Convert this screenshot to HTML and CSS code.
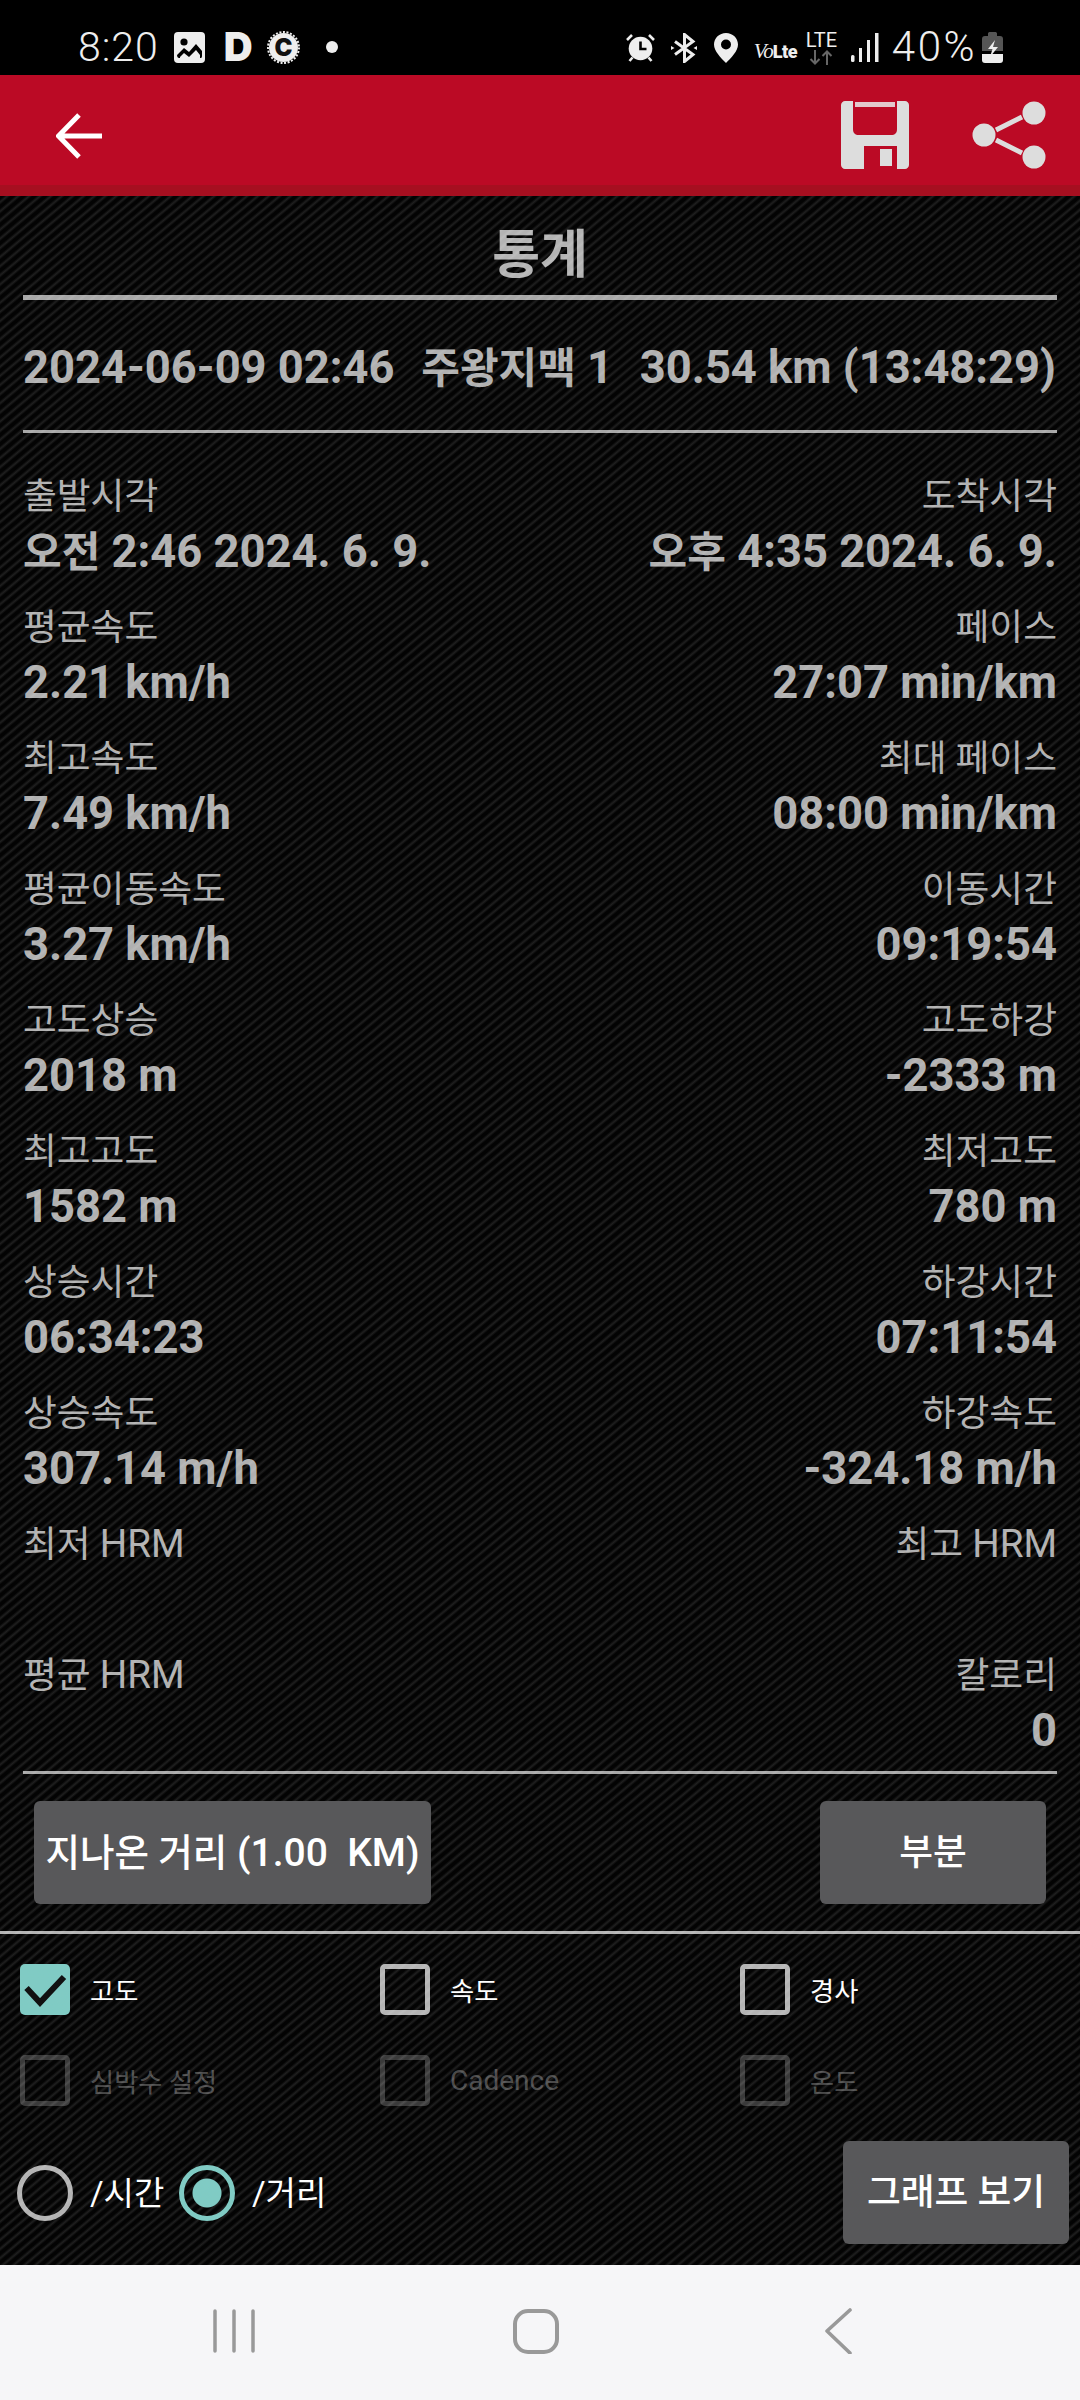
FILE: index.html
```html
<!DOCTYPE html>
<html lang="ko">
<head>
<meta charset="utf-8">
<title>통계</title>
<link rel="stylesheet" href="styles.css">
</head>
<body>
<div class="page">
  <header class="status">
    <div class="status-left">
      <span class="clock">8:20</span>
      <svg class="i-img" viewBox="0 0 31 31"><rect width="31" height="31" rx="4" fill="#eee"/><circle cx="10" cy="10" r="3.6" fill="#000"/><path d="M3 23l7-7 5 4 7-8 6 7v5c0 2-1 2-2 2H5c-1 0-2-1-2-3z" fill="#000"/><path d="M6 24l4-4 5 4 7-7 4 5v3c0 1 0 1-1 1H7c-1 0-1 0-1-2z" fill="#eee" transform="translate(0 1)"/></svg>
      <span class="d-logo">D</span>
      <svg class="i-c" viewBox="0 0 33 35"><circle cx="16.500" cy="17.500" r="14.500" fill="#eee"/><circle cx="16.500" cy="17.500" r="15.500" fill="none" stroke="#eee" stroke-width="2" stroke-dasharray="2 1.600"/><text x="16.500" y="26" text-anchor="middle" class="c-text">C</text></svg>
      <span class="dot"></span>
    </div>
    <div class="status-right">
      <svg class="i-alarm" viewBox="0 0 29 29"><circle cx="14.500" cy="15.500" r="11.800" fill="#eee"/><path d="M14.500 8.500V16H20.500" fill="none" stroke="#000" stroke-width="2.600"/><path d="M1 7l5-5M28 7l-5-5M3.500 28l3-3.500M25.500 28l-3-3.500" stroke="#eee" stroke-width="2.600" fill="none"/></svg>
      <svg class="i-bt" viewBox="0 0 26 30"><path d="M4 8.500l18 13-8.500 7V1.500l8.500 7-18 13" fill="none" stroke="#eee" stroke-width="3"/><path d="M0 13l3.500 2-3.500 2zM26 13l-3.500 2 3.500 2z" fill="#eee"/></svg>
      <svg class="i-pin" viewBox="0 0 24 30"><path fill-rule="evenodd" d="M12 0c6.600 0 12 5 12 11.500C24 18 17 25 12 30 7 25 0 18 0 11.500 0 5 5.400 0 12 0zm0 6.500a5 5 0 100 10 5 5 0 000-10z" fill="#eee"/></svg>
      <span class="volte"><i>Vo</i><b>Lte</b></span>
      <span class="lte">
        <span class="lte-text">LTE</span>
        <svg class="i-arrows" viewBox="0 0 24 15"><path d="M6 0v13M1.500 9L6 13.500 10.500 9" fill="none" stroke="#666" stroke-width="2"/><path d="M18 15V2M13.500 6L18 1.500 22.500 6" fill="none" stroke="#666" stroke-width="2"/></svg>
      </span>
      <svg class="i-signal" viewBox="0 0 28 29"><rect x="0" y="22" width="3.500" height="7" rx="1.500" fill="#eee"/><rect x="8" y="15" width="3" height="14" fill="#eee"/><rect x="16" y="7" width="3" height="22" fill="#eee"/><rect x="24" y="0" width="3.500" height="29" fill="#eee"/></svg>
      <span class="battery-text">40%</span>
      <svg class="i-bat" viewBox="0 0 21 31"><path d="M6 4V1.500C6 .5 7 0 8 0h5c1 0 2 .5 2 1.500V4h3c2 0 3 1 3 3v12H0V7c0-2 1-3 3-3z" fill="#555"/><path d="M0 22h21v6c0 2-1 3-3 3H3c-2 0-3-1-3-3z" fill="#eee"/><path d="M13 8l-7 9h4.500l-2.500 8 8-10h-5z" fill="#eee"/></svg>
    </div>
  </header>

  <div class="toolbar">
    <svg class="i-back" viewBox="0 0 46 46"><path d="M46 23H4M23 2L2.500 23 23 44" fill="none" stroke="#fff" stroke-width="5"/></svg>
    <div class="actions">
      <svg class="i-save" viewBox="0 0 68 68"><path fill-rule="evenodd" d="M4 0h60c2 0 4 2 4 4v60c0 2-2 4-4 4H4c-2 0-4-2-4-4V4c0-2 2-4 4-4zm8 0v28c0 4 2 6 6 6h32c4 0 6-2 6-6V0zm11 45v23h33V45z" fill="#ddd"/><rect x="14" y="1" width="40" height="5" fill="#e3c8cc"/><rect x="39" y="48" width="12" height="17" fill="#ddd"/></svg>
      <svg class="i-share" viewBox="0 0 74 68"><circle cx="62" cy="12" r="11.500" fill="#ddd"/><circle cx="12" cy="34" r="11.500" fill="#ddd"/><circle cx="62" cy="56" r="11.500" fill="#ddd"/><path d="M24 29l26-13M24 39l26 13" stroke="#ddd" stroke-width="5" fill="none"/></svg>
    </div>
  </div>

  <main class="content">
    <h1 class="title">통계</h1>
    <div class="rule rule-thick"></div>
    <div class="summary"><span>2024-06-09 02:46</span><span><span class="ko">주왕지맥</span> 1</span><span>30.54 km (13:48:29)</span></div>
    <div class="rule rule-thin"></div>

    <section class="stats">
      <div class="stat"><div class="label">출발시각</div><div class="value"><span class="ko">오전</span> 2:46 2024. 6. 9.</div></div>
      <div class="stat end"><div class="label">도착시각</div><div class="value"><span class="ko">오후</span> 4:35 2024. 6. 9.</div></div>
      <div class="stat"><div class="label">평균속도</div><div class="value">2.21 km/h</div></div>
      <div class="stat end"><div class="label">페이스</div><div class="value">27:07 min/km</div></div>
      <div class="stat"><div class="label">최고속도</div><div class="value">7.49 km/h</div></div>
      <div class="stat end"><div class="label">최대 페이스</div><div class="value">08:00 min/km</div></div>
      <div class="stat"><div class="label">평균이동속도</div><div class="value">3.27 km/h</div></div>
      <div class="stat end"><div class="label">이동시간</div><div class="value">09:19:54</div></div>
      <div class="stat"><div class="label">고도상승</div><div class="value">2018 m</div></div>
      <div class="stat end"><div class="label">고도하강</div><div class="value">-2333 m</div></div>
      <div class="stat"><div class="label">최고고도</div><div class="value">1582 m</div></div>
      <div class="stat end"><div class="label">최저고도</div><div class="value">780 m</div></div>
      <div class="stat"><div class="label">상승시간</div><div class="value">06:34:23</div></div>
      <div class="stat end"><div class="label">하강시간</div><div class="value">07:11:54</div></div>
      <div class="stat"><div class="label">상승속도</div><div class="value">307.14 m/h</div></div>
      <div class="stat end"><div class="label">하강속도</div><div class="value">-324.18 m/h</div></div>
      <div class="stat"><div class="label">최저 <span class="latin">HRM</span></div><div class="value"></div></div>
      <div class="stat end"><div class="label">최고 <span class="latin">HRM</span></div><div class="value"></div></div>
      <div class="stat"><div class="label">평균 <span class="latin">HRM</span></div><div class="value"></div></div>
      <div class="stat end"><div class="label">칼로리</div><div class="value">0</div></div>
    </section>
    <div class="rule rule-thin rule-stats"></div>

    <div class="buttons">
      <button class="btn btn-dist"><span class="btn-ko">지나온 거리</span> (1.00&nbsp;&nbsp;KM)</button>
      <button class="btn btn-part">부분</button>
    </div>
    <div class="rule-full"></div>

    <div class="checks">
      <label class="check"><span class="box on"><svg class="tick" viewBox="0 0 50 51"><path d="M6.500 24L20 38.500 44 13" fill="none" stroke="#111" stroke-width="6"/></svg></span><span>고도</span></label>
      <label class="check"><span class="box"></span><span>속도</span></label>
      <label class="check"><span class="box"></span><span>경사</span></label>
      <label class="check off"><span class="box"></span><span>심박수 설정</span></label>
      <label class="check off"><span class="box"></span><span class="check-latin">Cadence</span></label>
      <label class="check off"><span class="box"></span><span>온도</span></label>
    </div>

    <div class="graph-row">
      <label class="radio"><span class="ring"></span><span class="radio-text">/시간</span></label>
      <label class="radio"><span class="ring on"></span><span class="radio-text">/거리</span></label>
      <button class="btn btn-graph">그래프 보기</button>
    </div>
  </main>

  <nav class="navbar">
    <svg class="nav-icon" viewBox="0 0 60 46"><path d="M11 3v40M30 3v40M49 3v40" stroke="#999" stroke-width="3.500" stroke-linecap="round" fill="none"/></svg>
    <svg class="nav-icon" viewBox="0 0 60 46"><rect x="9" y="3" width="42" height="41" rx="13" fill="none" stroke="#999" stroke-width="4"/></svg>
    <svg class="nav-icon" viewBox="0 0 60 46"><path d="M42 2L19 23 42 45" fill="none" stroke="#999" stroke-width="3.600" stroke-linecap="round" stroke-linejoin="round"/></svg>
  </nav>
</div>
</body>
</html>
```

FILE: styles.css
```css
* { box-sizing: border-box; }
html, body { margin: 0; padding: 0; background: #000; }
body { font-family: "Roboto", "Noto Sans CJK KR", sans-serif; }
.page { width: 1080px; height: 2400px; display: flex; flex-direction: column; overflow: hidden; }

/* status bar */
.status { height: 75px; background: #000; display: flex; justify-content: space-between; align-items: flex-start; padding: 30px 77px 0 78px; color: #eee; flex: none; }
.status-left, .status-right { display: flex; align-items: flex-start; }
.clock { font-size: 41px; font-weight: 300; line-height: 34px; letter-spacing: 1px; }
.i-img { width: 31px; height: 31px; margin: 2px 0 0 15px; }
.d-logo { font-family: "Inter", sans-serif; font-weight: 900; font-size: 40px; line-height: 34px; margin-left: 19px; width: 29px; }
.i-c { width: 33px; height: 35px; margin-left: 14px; }
.c-text { font-family: "Inter", sans-serif; font-weight: 900; font-size: 24px; fill: #111; }
.dot { width: 12px; height: 12px; border-radius: 50%; background: #eee; margin: 11px 0 0 26px; }
.i-alarm { width: 29px; height: 29px; margin-top: 3px; }
.i-bt { width: 26px; height: 30px; margin: 3px 0 0 16px; }
.i-pin { width: 24px; height: 30px; margin: 3px 0 0 17px; }
.volte { width: 41px; margin: 8px 0 0 16px; line-height: 26px; white-space: nowrap; display: flex; align-items: baseline; }
.volte i { font-family: "Liberation Serif", serif; font-size: 21px; font-weight: 400; letter-spacing: -1px; }
.volte b { font-family: "Roboto", sans-serif; font-size: 18px; font-weight: 900; letter-spacing: -.5px; }
.lte { width: 33px; margin: 3px 0 0 10px; display: flex; flex-direction: column; align-items: center; }
.lte-text { font-size: 20px; line-height: 15px; font-weight: 400; }
.i-arrows { width: 24px; height: 15px; margin-top: 2px; }
.i-signal { width: 28px; height: 29px; margin: 3px 0 0 13px; }
.battery-text { font-size: 42px; font-weight: 300; line-height: 34px; margin-left: 13px; letter-spacing: 2.500px; }
.i-bat { width: 21px; height: 31px; margin: 2px 0 0 5px; }

/* toolbar */
.toolbar { height: 121px; flex: none; background: #bb0a25; border-bottom: 11px solid #a60f20; display: flex; justify-content: space-between; align-items: flex-start; padding: 26px 34px 0 56px; }
.i-back { width: 46px; height: 46px; margin-top: 12px; }
.actions { display: flex; gap: 63px; }
.i-save { width: 68px; height: 68px; }
.i-share { width: 74px; height: 68px; }

/* content */
.content { flex: 1; color: rgba(255, 255, 255, .7); background-color: #060606; background-image: repeating-linear-gradient(140deg, #030303 0, #030303 2.500px, #1f1f1f 4.800px, #030303 7px); display: flex; flex-direction: column; }
.title { margin: 0; height: 99px; padding-top: 25px; font-size: 52px; line-height: 70px; font-weight: 700; text-align: center; }
.rule { margin: 0 23px; background: rgba(255, 255, 255, .65); flex: none; }
.rule-thick { height: 5px; }
.rule-thin { height: 3px; }
.summary { margin: 38px 24px 32px 23px; height: 60px; line-height: 60px; font-size: 45.300px; font-weight: 700; display: flex; justify-content: space-between; white-space: nowrap; }
.ko { font-size: 42px; }
.stats { margin-top: 37px; padding: 0 23px; display: grid; grid-template-columns: 1fr 1fr; row-gap: 17px; }
.stat { height: 114px; }
.stat.end { text-align: right; }
.label { font-size: 36.750px; line-height: 54px; height: 50px; white-space: nowrap; }
.latin { font-size: 38.500px; line-height: 1; }
.value { font-size: 45.300px; line-height: 64px; height: 64px; font-weight: 700; white-space: nowrap; }
.rule-stats { margin-top: 8px; }

.buttons { display: flex; justify-content: space-between; padding: 27px 34px; flex: none; }
.btn { border: 0; border-radius: 6px; background: #58585a; color: #fff; font: 500 36.750px/1 "Roboto", "Noto Sans CJK KR", sans-serif; height: 103px; padding: 2px 0 0; white-space: nowrap; }
.btn-dist { width: 397px; font-size: 39px; }
.btn-ko { font-size: 37.500px; }
.btn-part { width: 226px; }
.rule-full { height: 3px; background: rgba(255, 255, 255, .7); flex: none; }

.checks { padding: 30px 0 0 20px; display: grid; grid-template-columns: repeat(3, 360px); row-gap: 40px; }
.check { display: flex; align-items: center; gap: 20px; font-size: 26.250px; color: #fff; height: 51px; }
.check-latin { font-size: 28px; }
.box { width: 50px; height: 51px; border: 5px solid rgba(255, 255, 255, .7); border-radius: 5px; flex: none; }
.box.on { background: #80cbc4; border: 0; }
.tick { display: block; width: 50px; height: 51px; }
.check.off { color: rgba(255, 255, 255, .3); }
.check.off .box { border-color: rgba(255, 255, 255, .22); }

.graph-row { margin-top: 35px; padding: 0 11px 0 17px; display: flex; align-items: center; }
.radio { display: flex; align-items: center; gap: 17px; font-size: 33px; color: #fff; width: 162px; }
.radio-text { padding-bottom: 4px; }
.ring { width: 56px; height: 56px; border-radius: 50%; border: 5px solid rgba(255, 255, 255, .7); flex: none; }
.ring.on { border-color: #80cbc4; background: radial-gradient(circle, #80cbc4 0, #80cbc4 14px, transparent 15px); }
.btn-graph { width: 226px; margin-left: auto; }

/* nav */
.navbar { height: 135px; flex: none; background: #f6f6f8; display: flex; justify-content: center; gap: 242px; padding: 43px 8px 0 0; }
.nav-icon { width: 60px; height: 46px; }
```
